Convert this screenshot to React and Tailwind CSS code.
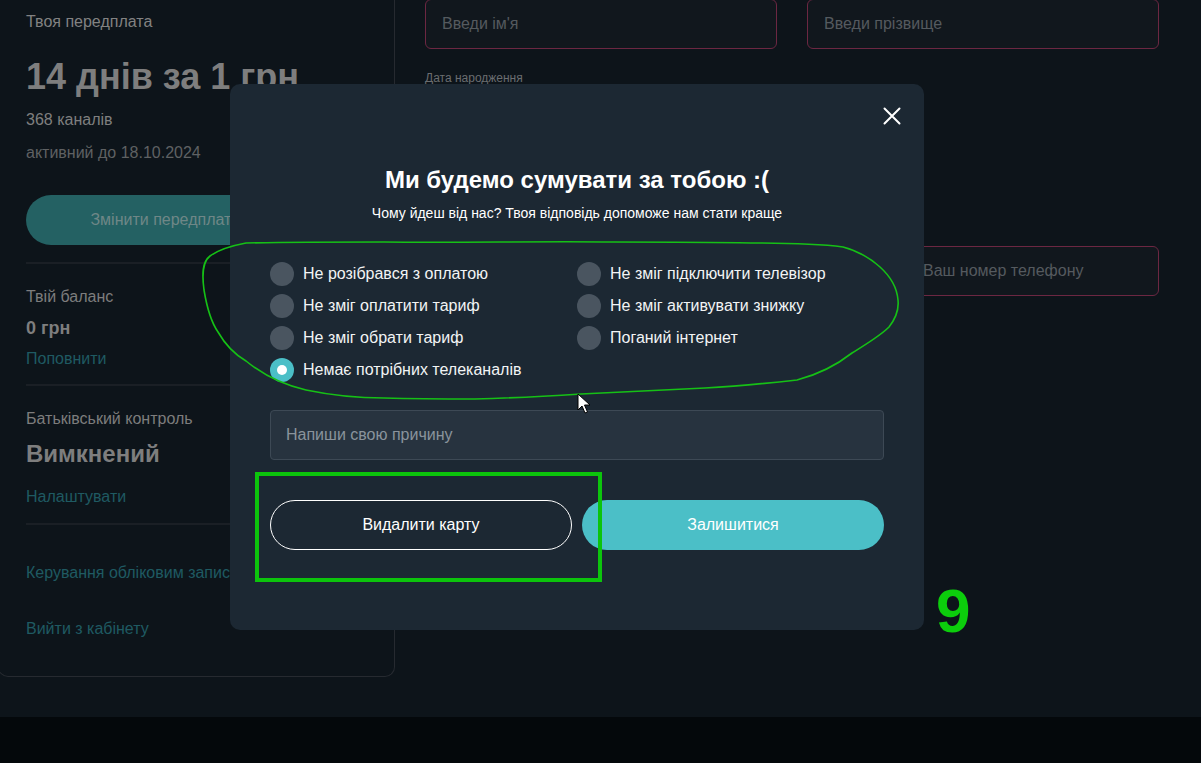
import React from "react";

const REASONS = [
  ["Не розібрався з оплатою", "Не зміг підключити телевізор"],
  ["Не зміг оплатити тариф", "Не зміг активувати знижку"],
  ["Не зміг обрати тариф", "Поганий інтернет"],
  ["Немає потрібних телеканалів", null],
];

function Radio({ label, checked }) {
  return (
    <label className="flex items-center gap-[9px] h-6 cursor-pointer">
      <span className={`w-6 h-6 rounded-full flex items-center justify-center shrink-0 ${checked ? "bg-[#4bbfc7]" : "bg-[#4a5560]"}`}>
        {checked && <span className="w-[10px] h-[10px] rounded-full bg-white" />}
      </span>
      <span className="text-[16px] text-[#f2f4f5] leading-6">{label}</span>
    </label>
  );
}

function Sidebar() {
  return (
    <div className="w-[397px] -ml-[2px] h-[677px] border border-t-0 border-[#262a30] rounded-b-[10px] pl-[27px] pr-[26px] flex flex-col">
      <div className="pt-[10px] text-[16px] leading-6 text-[#828282]">Твоя передплата</div>
      <div className="mt-[23px] text-[36px] leading-10 font-bold text-[#7e7e7e]">14 днів за 1 грн</div>
      <div className="mt-[11px] text-[16px] leading-6 text-[#7f7f7f]">368 каналів</div>
      <div className="mt-[9px] text-[16px] leading-6 text-[#5f6163]">активний до 18.10.2024</div>
      <button className="mt-[30px] w-[278px] h-[50px] rounded-full bg-[#246163] text-[16px] text-[#6f8787]">Змінити передплату</button>
      <div className="mt-[17px] h-[2px] bg-[#1a1f25]" />
      <div className="mt-[21px] text-[16px] leading-6 text-[#7d7d7d]">Твій баланс</div>
      <div className="mt-[7px] text-[18px] leading-6 font-bold text-[#7e7e7e]">0 грн</div>
      <div className="mt-[7px] text-[16px] leading-6 text-[#1f5a62]">Поповнити</div>
      <div className="mt-[13px] h-[2px] bg-[#1a1f25]" />
      <div className="mt-[21px] text-[16px] leading-6 text-[#7d7d7d]">Батьківський контроль</div>
      <div className="mt-[7px] text-[24px] leading-8 font-bold text-[#7e7e7e]">Вимкнений</div>
      <div className="mt-[15px] text-[16px] leading-6 text-[#1f5a62]">Налаштувати</div>
      <div className="mt-[14px] h-[2px] bg-[#1a1f25]" />
      <div className="mt-[36px] text-[16px] leading-6 text-[#1f5a62] whitespace-nowrap">Керування обліковим записом</div>
      <div className="mt-[32px] text-[16px] leading-6 text-[#1f5a62]">Вийти з кабінету</div>
    </div>
  );
}

function Field({ placeholder }) {
  return (
    <div className="h-[50px] rounded-[6px] border border-[#6c2742] bg-[#11171d] px-[16px] flex items-center text-[16px] text-[#555a5f]">
      {placeholder}
    </div>
  );
}

function ProfileForm() {
  return (
    <div className="ml-[30px] w-[734px] flex flex-col">
      <div className="grid grid-cols-2 gap-[30px] -mt-px">
        <Field placeholder="Введи ім'я" />
        <Field placeholder="Введи прізвище" />
      </div>
      <div className="mt-[21px] text-[12px] leading-4 text-[#6a6d70]">Дата народження</div>
      <div className="mt-[34px] h-[50px] rounded-[6px] border border-[#2a2f36] bg-[#11171d] w-[352px]" />
      <div className="mt-[76px] h-[50px] rounded-[6px] border border-[#6c2742] bg-[#11171d] flex items-center text-[16px] text-[#555a5f]">
        <div className="w-[497px] h-full border-r border-[#2a2f36]" />
        <span>Ваш номер телефону</span>
      </div>
    </div>
  );
}

function CancelModal() {
  return (
    <div className="absolute left-[230px] top-[84px] w-[694px] h-[546px] rounded-[10px] bg-[#1c2833] px-[40px] pt-[82px]">
      <button className="absolute right-[23px] top-[23px] w-[18px] h-[18px]" aria-label="close">
        <svg viewBox="0 0 18 18" className="w-[18px] h-[18px]" fill="none" stroke="white" strokeWidth="2" strokeLinecap="round">
          <path d="M1.5 1.5 L16.5 16.5 M16.5 1.5 L1.5 16.5" />
        </svg>
      </button>
      <h2 className="text-center text-[24px] leading-7 font-bold text-white">Ми будемо сумувати за тобою :(</h2>
      <p className="mt-[9px] text-center text-[14px] leading-5 text-white">Чому йдеш від нас? Твоя відповідь допоможе нам стати краще</p>
      <div className="mt-[39px] grid grid-cols-2 gap-y-2">
        {REASONS.map(([a, b], i) => (
          <React.Fragment key={i}>
            <Radio label={a} checked={i === 3} />
            {b ? <Radio label={b} /> : <div />}
          </React.Fragment>
        ))}
      </div>
      <div className="mt-[28px] h-[50px] rounded-[4px] border border-[#3d4955] bg-[#27333f] px-[15px] flex items-center text-[16px] text-[#8a939c]">
        Напиши свою причину
      </div>
      <div className="mt-[40px] grid grid-cols-2 gap-[10px]">
        <button className="h-[50px] rounded-full border border-white text-[16px] text-white">Видалити карту</button>
        <button className="h-[50px] rounded-full bg-[#4bbfc7] text-[16px] text-white">Залишитися</button>
      </div>
    </div>
  );
}

function Annotations() {
  return (
    <svg className="absolute inset-0 pointer-events-none" width="1201" height="763" viewBox="0 0 1201 763">
      <path
        d="M246 243 C230 246 218 250 210 256 C202 262 202 275 204 290 C207 308 211 322 218 332 C226 346 234 354 246 361 C262 374 284 385 306 390 C330 395 357 398 384 398 C420 399 450 399 475 399 C515 398 550 396 581 394 C625 392 665 390 705 388 C740 386 770 383 797 380 C820 374 838 364 852 353 C868 343 880 336 889 327 C896 318 899 309 898 300 C897 288 890 276 880 267 C870 258 858 251 843 247 C812 243 782 243 751 243 C705 242 660 242 613 242 C540 241 460 243 384 242 C340 242 290 242 246 243 Z"
        fill="none"
        stroke="#16c016"
        strokeWidth="1.6"
      />
      <rect x="257" y="474" width="343" height="106" fill="none" stroke="#0cc40c" strokeWidth="4" />
      <path d="M578 394 L578 410 L582 406 L585 413 L587.5 412 L584.5 405 L590 405 Z" fill="white" stroke="black" strokeWidth="1" />
    </svg>
  );
}

export default function App() {
  return (
    <div className="relative w-[1201px] h-[763px] overflow-hidden bg-[#04080b] font-['Liberation_Sans',Arial,sans-serif]">
      <div className="h-[717px] bg-[#0d141a] flex items-start">
        <Sidebar />
        <ProfileForm />
      </div>
      <CancelModal />
      <Annotations />
      <div className="absolute left-[936px] top-[576px] text-[62px] leading-[70px] font-bold text-[#0ccd0c]">9</div>
    </div>
  );
}
